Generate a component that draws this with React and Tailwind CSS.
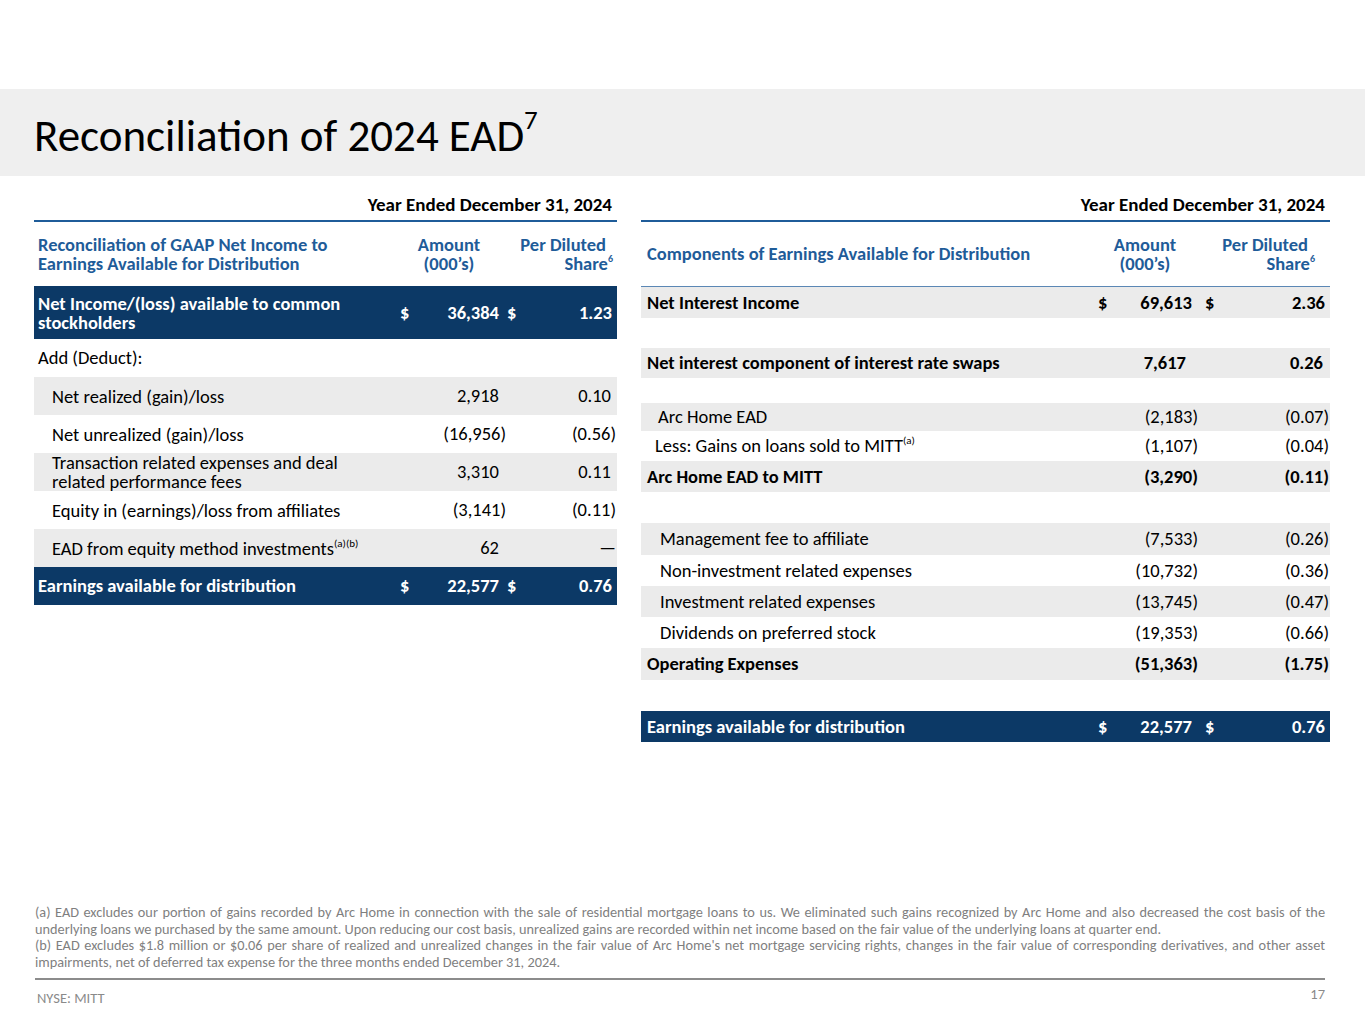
const NAVY = 'bg-[#0c3966]';

const leftRows = [
  { label: 'Net realized (gain)/loss', amt: '2,918', ps: '0.10', gray: true },
  { label: 'Net unrealized (gain)/loss', amt: '(16,956)', ps: '(0.56)' },
  { label: 'Transaction related expenses and deal', label2: 'related performance fees', amt: '3,310', ps: '0.11', gray: true },
  { label: 'Equity in (earnings)/loss from affiliates', amt: '(3,141)', ps: '(0.11)' },
  { label: 'EAD from equity method investments', sup: '(a)(b)', amt: '62', ps: '—', gray: true },
];

const rightRows = [
  { label: 'Net Interest Income', bold: true, dollar: true, amt: '69,613', ps: '2.36', gray: true, h: 'h-[31px]' },
  { spacer: true, h: 'h-[30px]' },
  { label: 'Net interest component of interest rate swaps', bold: true, amt: '7,617', ps: '0.26', gray: true, h: 'h-[30px]', shift: true },
  { spacer: true, h: 'h-[25px]' },
  { label: 'Arc Home EAD', indent: 'pl-[17px]', amt: '(2,183)', ps: '(0.07)', gray: true, h: 'h-[28px]' },
  { label: 'Less: Gains on loans sold to MITT', sup: '(a)', indent: 'pl-[14px]', amt: '(1,107)', ps: '(0.04)', h: 'h-[30px]' },
  { label: 'Arc Home EAD to MITT', bold: true, amt: '(3,290)', ps: '(0.11)', gray: true, h: 'h-[31px]' },
  { spacer: true, h: 'h-[31px]' },
  { label: 'Management fee to affiliate', indent: 'pl-[19px]', amt: '(7,533)', ps: '(0.26)', gray: true, h: 'h-[32px]' },
  { label: 'Non-investment related expenses', indent: 'pl-[19px]', amt: '(10,732)', ps: '(0.36)', h: 'h-[31px]' },
  { label: 'Investment related expenses', indent: 'pl-[19px]', amt: '(13,745)', ps: '(0.47)', gray: true, h: 'h-[31px]' },
  { label: 'Dividends on preferred stock', indent: 'pl-[19px]', amt: '(19,353)', ps: '(0.66)', h: 'h-[31px]' },
  { label: 'Operating Expenses', bold: true, amt: '(51,363)', ps: '(1.75)', gray: true, h: 'h-[32px]' },
  { spacer: true, h: 'h-[31px]' },
];

// numbers without a paren keep room for one so the digits line up
const Num = ({ v, pad }) => {
  const paren = v.startsWith('(');
  return <span className={paren || v === '—' ? '' : pad}>{v}</span>;
};

const Sup = ({ children }) => (
  <sup className="text-[11px] relative -top-[8px]">{children}</sup>
);

const LeftTable = () => (
  <div className="w-[583px]">
    <div className="text-right text-[19px] font-bold text-black pr-[5px] leading-none pb-[6px]">
      Year Ended December 31, 2024
    </div>
    <div className="h-[2px] bg-[#1f5c99]" />
    <div className="grid grid-cols-[362px_24px_86px_22px_89px] text-[18.5px]">
      {/* column heads */}
      <div className="col-span-2 h-[64px] flex items-center pl-[4px] font-bold text-[#1f5c99] leading-[19px]">
        <div>Reconciliation of GAAP Net Income to<br />Earnings Available for Distribution</div>
      </div>
      <div className="h-[64px] flex items-center justify-center font-bold text-[#1f5c99] leading-[19px] text-center -ml-[28px]">
        <div>Amount<br />(000’s)</div>
      </div>
      <div className="col-span-2 h-[64px] flex items-center justify-end pr-[11px] font-bold text-[#1f5c99] leading-[19px] text-right">
        <div>
          Per Diluted<br />Share<sup className="text-[10px] relative -top-[8px] mr-[-7px]">6</sup>
        </div>
      </div>

      {/* net income */}
      <div className={`${NAVY} h-[53px] flex items-center pl-[4px] text-white font-bold leading-[19px]`}>
        <div>Net Income/(loss) available to common<br />stockholders</div>
      </div>
      <div className={`${NAVY} h-[53px] flex items-center pl-[4px] text-white font-bold`}>$</div>
      <div className={`${NAVY} h-[53px] flex items-center justify-end text-white font-bold`}><Num v="36,384" pad="pr-[7px]" /></div>
      <div className={`${NAVY} h-[53px] flex items-center pl-[1px] text-white font-bold`}>$</div>
      <div className={`${NAVY} h-[53px] flex items-center justify-end text-white font-bold`}><Num v="1.23" pad="pr-[5px]" /></div>

      <div className="col-span-5 h-[38px] flex items-center pl-[4px] text-black">Add (Deduct):</div>

      {leftRows.map((r) => {
        const bg = r.gray ? 'bg-[#ebebeb]' : 'bg-white';
        return (
          <div key={r.label} className="contents">
            <div className={`${bg} col-span-2 h-[38px] flex items-center pl-[18px] text-black leading-[19px]`}>
              <div className="whitespace-nowrap">
                {r.label}
                {r.sup && <Sup>{r.sup}</Sup>}
                {r.label2 && <><br />{r.label2}</>}
              </div>
            </div>
            <div className={`${bg} h-[38px] flex items-center justify-end text-black`}><Num v={r.amt} pad="pr-[7px]" /></div>
            <div className={`${bg} h-[38px]`} />
            <div className={`${bg} h-[38px] flex items-center justify-end text-black pr-[1px]`}><Num v={r.ps} pad="pr-[5px]" /></div>
          </div>
        );
      })}

      <div className={`${NAVY} h-[38px] flex items-center pl-[4px] text-white font-bold`}>Earnings available for distribution</div>
      <div className={`${NAVY} h-[38px] flex items-center pl-[4px] text-white font-bold`}>$</div>
      <div className={`${NAVY} h-[38px] flex items-center justify-end text-white font-bold`}><Num v="22,577" pad="pr-[7px]" /></div>
      <div className={`${NAVY} h-[38px] flex items-center pl-[1px] text-white font-bold`}>$</div>
      <div className={`${NAVY} h-[38px] flex items-center justify-end text-white font-bold`}><Num v="0.76" pad="pr-[5px]" /></div>
    </div>
  </div>
);

const RightTable = () => (
  <div className="w-[689px]">
    <div className="text-right text-[19px] font-bold text-black pr-[5px] leading-none pb-[6px]">
      Year Ended December 31, 2024
    </div>
    <div className="h-[2px] bg-[#1f5c99]" />
    <div className="grid grid-cols-[449px_25px_83px_22px_110px] text-[18.5px]">
      <div className="col-span-2 h-[64px] flex items-center pl-[6px] font-bold text-[#1f5c99]">
        Components of Earnings Available for Distribution
      </div>
      <div className="h-[64px] flex items-center justify-center font-bold text-[#1f5c99] leading-[19px] text-center -ml-[23px]">
        <div>Amount<br />(000’s)</div>
      </div>
      <div className="col-span-2 h-[64px] flex items-center justify-end pr-[22px] font-bold text-[#1f5c99] leading-[19px] text-right">
        <div>
          Per Diluted<br />Share<sup className="text-[10px] relative -top-[8px] mr-[-7px]">6</sup>
        </div>
      </div>
      <div className="col-span-5 h-[1px] bg-[#5b87b5]" />

      {rightRows.map((r, i) => {
        if (r.spacer) return <div key={i} className={`col-span-5 ${r.h}`} />;
        const bg = r.gray ? 'bg-[#ebebeb]' : 'bg-white';
        const wt = r.bold ? 'font-bold' : '';
        return (
          <div key={i} className="contents">
            <div className={`${bg} ${r.h} ${wt} flex items-center ${r.indent || 'pl-[6px]'} text-black`}>
              <span>
                {r.label}
                {r.sup && <Sup>{r.sup}</Sup>}
              </span>
            </div>
            <div className={`${bg} ${r.h} ${wt} flex items-center pl-[8px] text-black`}>{r.dollar ? '$' : ''}</div>
            <div className={`${bg} ${r.h} ${wt} flex items-center justify-end text-black ${r.shift ? 'pr-[6px]' : ''}`}><Num v={r.amt} pad="pr-[6px]" /></div>
            <div className={`${bg} ${r.h} ${wt} flex items-center pl-[7px] text-black`}>{r.dollar ? '$' : ''}</div>
            <div className={`${bg} ${r.h} ${wt} flex items-center justify-end text-black ${r.shift ? 'pr-[3px]' : 'pr-[1px]'}`}><Num v={r.ps} pad="pr-[4px]" /></div>
          </div>
        );
      })}

      <div className={`${NAVY} h-[31px] flex items-center pl-[6px] text-white font-bold`}>Earnings available for distribution</div>
      <div className={`${NAVY} h-[31px] flex items-center pl-[8px] text-white font-bold`}>$</div>
      <div className={`${NAVY} h-[31px] flex items-center justify-end text-white font-bold`}><Num v="22,577" pad="pr-[6px]" /></div>
      <div className={`${NAVY} h-[31px] flex items-center pl-[7px] text-white font-bold`}>$</div>
      <div className={`${NAVY} h-[31px] flex items-center justify-end text-white font-bold pr-[1px]`}><Num v="0.76" pad="pr-[4px]" /></div>
    </div>
  </div>
);

export default function App() {
  return (
    <div className="w-[1365px] h-[1024px] bg-white font-['Carlito','Lato','Open_Sans',sans-serif] flex flex-col">
      <div className="h-[89px]" />
      <div className="h-[87px] bg-[#efefef] flex items-center pl-[34px]">
        <h1 className="text-[45px] text-black leading-none pt-[6px]">
          Reconciliation of 2024 EAD<sup className="text-[27px] relative -top-[22px]">7</sup>
        </h1>
      </div>

      <div className="flex pl-[34px] pt-[19px] gap-[24px]">
        <LeftTable />
        <RightTable />
      </div>

      <div className="flex-1" />

      <div className="px-[35px] pr-[40px]">
        <p className="text-[14.3px] leading-[16.5px] text-[#7f7f7f] text-justify">
          (a) EAD excludes our portion of gains recorded by Arc Home in connection with the sale of residential mortgage loans to us. We eliminated such gains recognized by Arc Home and also decreased the cost basis of the underlying loans we purchased by the same amount. Upon reducing our cost basis, unrealized gains are recorded within net income based on the fair value of the underlying loans at quarter end.
        </p>
        <p className="text-[14.3px] leading-[16.5px] text-[#7f7f7f] text-justify">
          (b) EAD excludes $1.8 million or $0.06 per share of realized and unrealized changes in the fair value of Arc Home's net mortgage servicing rights, changes in the fair value of corresponding derivatives, and other asset impairments, net of deferred tax expense for the three months ended December 31, 2024.
        </p>
        <div className="h-[2px] bg-[#8c8c8c] mt-[8px]" />
        <div className="flex justify-between text-[14.5px] text-[#8a8a8a] pt-[8px] h-[44px]">
          <span className="pl-[2px]">NYSE: MITT</span>
          <span className="-mt-[4px]">17</span>
        </div>
      </div>
    </div>
  );
}
